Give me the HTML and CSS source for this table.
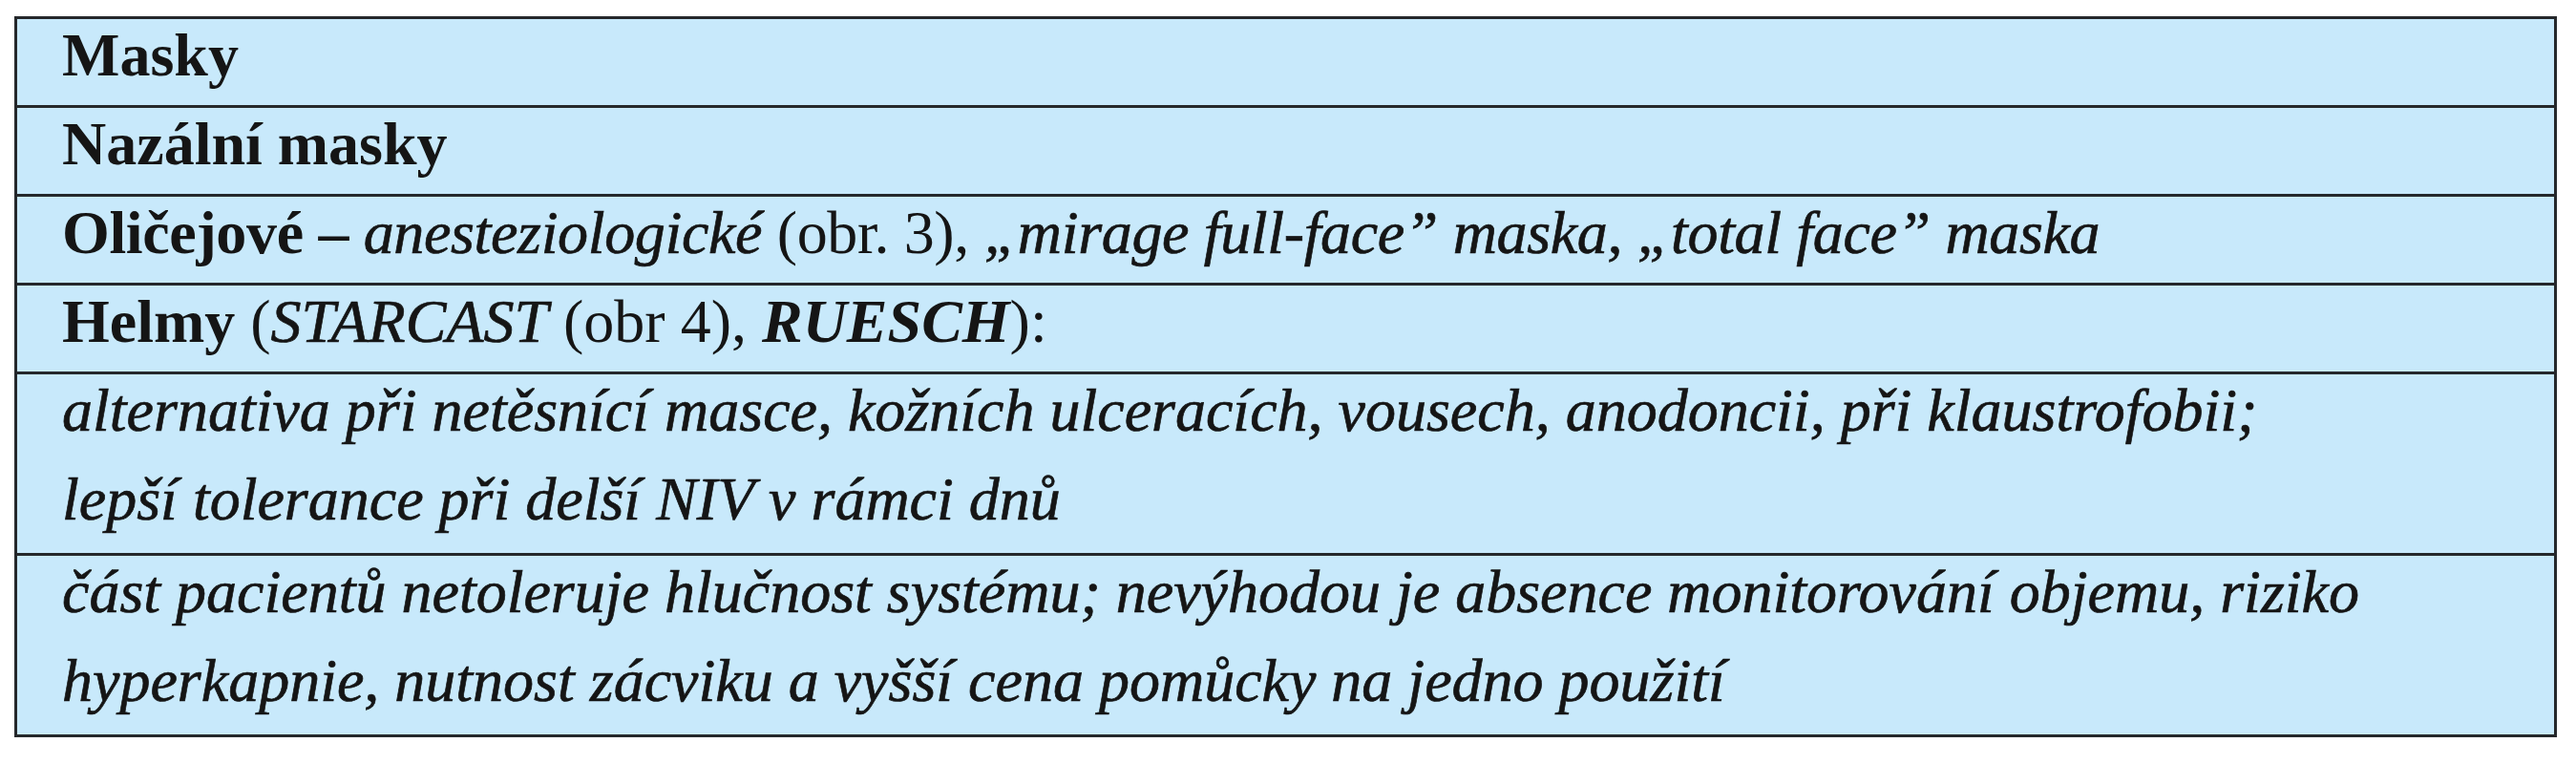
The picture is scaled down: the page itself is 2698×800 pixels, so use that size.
FILE: index.html
```html
<!DOCTYPE html>
<html lang="cs">
<head>
<meta charset="utf-8">
<title>Masky</title>
<link rel="stylesheet" href="styles.css">
</head>
<body>
<div class="table">
  <div class="row"><div class="line"><b>Masky</b></div></div>
  <div class="row"><div class="line"><b>Nazální masky</b></div></div>
  <div class="row"><div class="line tight"><b>Oličejové –</b> <i>anesteziologické</i> (obr. 3), <i>„mirage full-face” maska, „total face” maska</i></div></div>
  <div class="row"><div class="line"><b>Helmy</b> (<i>STARCAST</i> (obr 4), <b><i>RUESCH</i></b>):</div></div>
  <div class="row multi">
    <div class="line"><i>alternativa při netěsnící masce, kožních ulceracích, vousech, anodoncii, při klaustrofobii;</i></div>
    <div class="line"><i>lepší tolerance při delší NIV v rámci dnů</i></div>
  </div>
  <div class="row multi last">
    <div class="line"><i>část pacientů netoleruje hlučnost systému; nevýhodou je absence monitorování objemu, riziko</i></div>
    <div class="line"><i>hyperkapnie, nutnost zácviku a vyšší cena pomůcky na jedno použití</i></div>
  </div>
</div>
</body>
</html>
```
FILE: styles.css
```css
html, body {
  margin: 0;
  padding: 0;
  background: #ffffff;
}
body {
  font-family: "Liberation Serif", "Times New Roman", serif;
  color: #151515;
  font-size: 64px;
}
.table {
  margin: 17px 0 0 15px;
  width: 2663px;
  box-sizing: border-box;
  border: 3px solid #25282b;
  background: #c8e9fb;
}
.row {
  border-bottom: 3px solid #25282b;
  padding: 0 0 14px 47px;
}
.row.last {
  border-bottom: none;
}
.row.multi {
  padding-bottom: 18px;
}
.line {
  line-height: 76px;
  white-space: nowrap;
}
.line.tight {
  letter-spacing: -0.35px;
}
.line + .line {
  margin-top: 17px;
}
b { font-weight: bold; }
i {
  font-style: italic;
  -webkit-text-stroke: 0.7px #151515;
}
b i {
  -webkit-text-stroke: 0;
}
```
